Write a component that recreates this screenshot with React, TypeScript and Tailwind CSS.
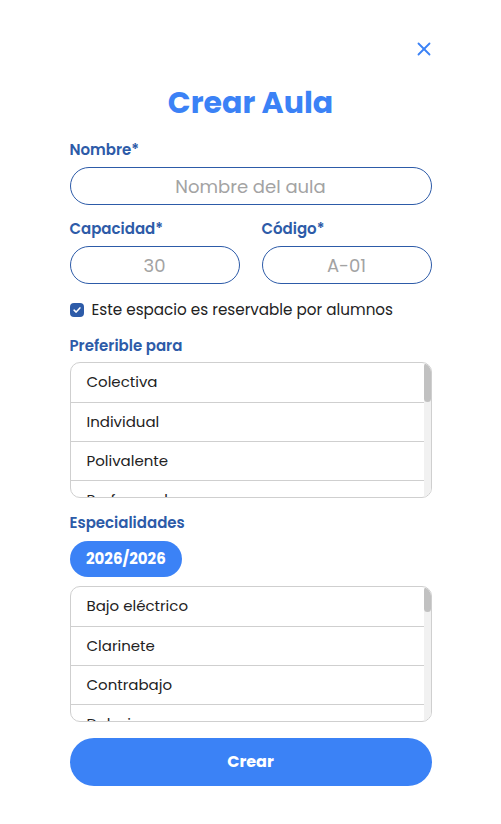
import React from 'react';
import { X } from 'lucide-react';

const preferible = ['Colectiva', 'Individual', 'Polivalente', 'Profesorado', 'Otro'];
const especialidades = ['Bajo eléctrico', 'Clarinete', 'Contrabajo', 'Dulzaina', 'Flauta', 'Guitarra', 'Oboe'];

// Listado con barra de scroll dibujada (la nativa no se ve en headless)
const List: React.FC<{ items: string[]; thumb: number }> = ({ items, thumb }) => (
  <div className="relative h-[136px] overflow-hidden border border-[#cfcfcf] rounded-[10px] bg-white">
    <div className="pr-[7px]">
      {items.map((item, i) => (
        <div
          key={item}
          className={`h-[39px] flex items-center pl-4 text-[15px] text-[#222] ${i > 0 ? 'border-t border-[#cfcfcf]' : ''}`}
        >
          {item}
        </div>
      ))}
    </div>
    <div className="absolute top-0 right-0 bottom-0 w-[7px] bg-[#f1f1f1]">
      <div className="w-full rounded-full bg-[#c1c1c1]" style={{ height: thumb }} />
    </div>
  </div>
);

const Label: React.FC<{ children: React.ReactNode; className?: string }> = ({ children, className = '' }) => (
  <label className={`text-[15px] font-semibold text-[#2d5ba8] leading-none ${className}`}>{children}</label>
);

const Field: React.FC<{ placeholder: string; className?: string }> = ({ placeholder, className = '' }) => (
  <div className={`h-[38px] rounded-full border border-[#2d5ba8] flex items-center justify-center text-[18px] text-[#a3a3a3] ${className}`}>
    {placeholder}
  </div>
);

export default function App() {
  return (
    <div className="min-h-[824px] bg-white font-['Poppins','Open_Sans',sans-serif]">
      <div className="w-[362px] mx-auto pt-[38px] flex flex-col">
        {/* Close */}
        <div className="flex justify-end">
          <X className="w-[22px] h-[22px] text-[#3b82f6] -mr-[3px]" strokeWidth={2} />
        </div>

        <h1 className="text-center text-[30px] font-bold text-[#3b82f6] mt-[28px] leading-none">Crear Aula</h1>

        {/* Nombre */}
        <Label className="mt-[24px]">Nombre*</Label>
        <Field placeholder="Nombre del aula" className="mt-[10px]" />

        {/* Capacidad / Código */}
        <div className="mt-[16px] grid grid-cols-2 gap-[22px]">
          <div className="flex flex-col">
            <Label>Capacidad*</Label>
            <Field placeholder="30" className="mt-[10px]" />
          </div>
          <div className="flex flex-col">
            <Label>Código*</Label>
            <Field placeholder="A-01" className="mt-[10px]" />
          </div>
        </div>

        {/* Checkbox */}
        <div className="mt-[15px] flex items-center gap-[8px]">
          <span className="w-[14px] h-[14px] rounded-[4px] bg-[#2d5ba8] flex items-center justify-center">
            <svg viewBox="0 0 12 12" className="w-[10px] h-[10px]">
              <path d="M2.5 6.2 L5 8.5 L9.5 3.5" fill="none" stroke="white" strokeWidth="1.8" strokeLinecap="round" strokeLinejoin="round" />
            </svg>
          </span>
          <span className="text-[15.2px] text-[#222]">Este espacio es reservable por alumnos</span>
        </div>

        {/* Preferible para */}
        <Label className="mt-[16px]">Preferible para</Label>
        <div className="mt-[9px]">
          <List items={preferible} thumb={39} />
        </div>

        {/* Especialidades */}
        <Label className="mt-[17px]">Especialidades</Label>
        <div className="mt-[11px] flex">
          <span className="h-[36px] px-[16.5px] rounded-full bg-[#3b82f6] text-white text-[15px] font-bold flex items-center">
            2026/2026
          </span>
        </div>
        <div className="mt-[9px]">
          <List items={especialidades} thumb={25} />
        </div>

        <button className="mt-[16px] h-[48px] rounded-full bg-[#3b82f6] text-white text-[16px] font-bold">
          Crear
        </button>
      </div>
    </div>
  );
}
